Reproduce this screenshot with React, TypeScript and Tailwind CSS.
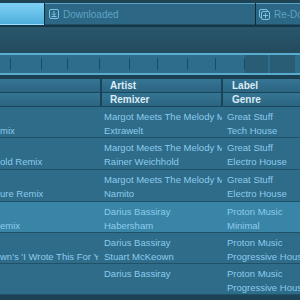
import React from 'react'

const font = { fontFamily: '"Liberation Sans", Arial, sans-serif' }

interface Track {
  title: string
  artist: string
  remixer: string
  label: string
  genre: string
  h: number
  selected?: boolean
}

const tracks: Track[] = [
  { title: 'mix', artist: 'Margot Meets The Melody Makers', remixer: 'Extrawelt', label: 'Great Stuff', genre: 'Tech House', h: 31 },
  { title: 'old Remix', artist: 'Margot Meets The Melody Makers', remixer: 'Rainer Weichhold', label: 'Great Stuff', genre: 'Electro House', h: 32 },
  { title: 'ure Remix', artist: 'Margot Meets The Melody Makers', remixer: 'Namito', label: 'Great Stuff', genre: 'Electro House', h: 32 },
  { title: 'emix', artist: 'Darius Bassiray', remixer: 'Habersham', label: 'Proton Music', genre: 'Minimal', h: 31, selected: true },
  { title: "wn's 'I Wrote This For You' Remix", artist: 'Darius Bassiray', remixer: 'Stuart McKeown', label: 'Proton Music', genre: 'Progressive House', h: 31 },
  { title: '', artist: 'Darius Bassiray', remixer: '', label: 'Proton Music', genre: 'Progressive House', h: 31 },
]

const segments = [11, 31, 26, 32, 30, 28, 30, 28, 29]

function DownloadIcon() {
  return (
    <svg className="shrink-0" width="10" height="10" viewBox="0 0 10 10" fill="none" stroke="#7fc3e3" strokeWidth="1">
      <rect x="0.5" y="0.5" width="9" height="9" rx="1.5" />
      <path d="M5 2v4M3 4.5l2 2 2-2M2.5 7.5h5" />
    </svg>
  )
}

function RedoIcon() {
  return (
    <svg className="shrink-0" width="11" height="11" viewBox="0 0 11 11" fill="none" stroke="#7fc3e3" strokeWidth="1">
      <rect x="0.5" y="0.5" width="8" height="8" rx="1.5" />
      <rect x="2.5" y="2.5" width="8" height="8" rx="1.5" fill="#2c6885" />
      <path d="M6.5 4v5M4 6.5h5" />
    </svg>
  )
}

function Tabs() {
  return (
    <div className="flex h-[22px] bg-[#2c6885]">
      <div className="w-[44px] shrink-0 bg-gradient-to-b from-[#7fd2f5] to-[#4eaedc] border-b border-[#9be0ff]" />
      <div className="w-px shrink-0 bg-[#0f2b38]" />
      <div className="flex-1 flex items-center gap-[4px] pl-[4px] border-t border-[#5aa4c6] border-b border-b-[#214f65]">
        <DownloadIcon />
        <span className="text-[10px] text-[#5fa2c3]">Downloaded</span>
      </div>
      <div className="w-px shrink-0 bg-[#0f2b38]" />
      <div className="w-[44px] shrink-0 flex items-center gap-[4px] pl-[3px] border-t border-[#5aa4c6] border-b border-b-[#214f65] overflow-hidden">
        <RedoIcon />
        <span className="text-[10px] text-[#5fa2c3] whitespace-nowrap">Re-Do</span>
      </div>
    </div>
  )
}

function Toolbar() {
  return (
    <div className="flex h-[18px] bg-[#2e6d8c]">
      {segments.map((w, i) => (
        <div key={i} className="flex shrink-0" style={{ width: w }}>
          <div className="flex-1" />
          <div className="w-px my-[3px] bg-[#1c4d63]" />
        </div>
      ))}
      <div className="w-[25px] shrink-0 bg-[#285d75] border-r-2 border-[#2e6d8c]" />
      <div className="w-[25px] shrink-0 bg-[#285d75]" />
      <div className="flex-1" />
    </div>
  )
}

function HeaderRow({ a, b }: { a: string; b: string }) {
  return (
    <div className="flex h-[14px] border-b border-[#1a4457]">
      <div className="w-[100px] shrink-0 bg-gradient-to-b from-[#357594] to-[#2b6582]" />
      <div className="w-[2px] bg-[#1a4457]" />
      <div className="w-[119px] shrink-0 bg-gradient-to-b from-[#357594] to-[#2b6582] pl-[8px] text-[10px] font-bold leading-[13px] text-[#dcecf4]">{a}</div>
      <div className="w-[2px] bg-[#1a4457]" />
      <div className="flex-1 bg-gradient-to-b from-[#357594] to-[#2b6582] pl-[9px] text-[10px] font-bold leading-[13px] text-[#dcecf4]">{b}</div>
    </div>
  )
}

function Row({ t }: { t: Track }) {
  return (
    <div
      className={`flex border-b border-[#1f5268] pt-[3px] text-[9.5px] leading-[14px] text-[#8ccbea] ${t.selected ? 'bg-[#3985a8]' : 'bg-[#2e6c8a]'}`}
      style={{ height: t.h }}
    >
      <div className="w-[98px] shrink-0 overflow-hidden whitespace-nowrap pt-[14px]">{t.title}</div>
      <div className="w-[6px] shrink-0" />
      <div className="w-[118px] shrink-0 overflow-hidden whitespace-nowrap">
        <div>{t.artist}</div>
        <div>{t.remixer}</div>
      </div>
      <div className="w-[5px] shrink-0" />
      <div className="flex-1 overflow-hidden whitespace-nowrap">
        <div>{t.label}</div>
        <div>{t.genre}</div>
      </div>
    </div>
  )
}

export default function App() {
  return (
    <div className="w-[300px] h-[300px] overflow-hidden bg-[#1c4254]" style={font}>
      <div className="h-[3px] bg-[#1d4354]" />
      <Tabs />
      <div className="h-[2px] bg-[#14384a]" />
      <div className="h-[26px] bg-gradient-to-b from-[#29566b] to-[#234b5e]" />
      <div className="h-[2px] bg-[#5aaccf]" />
      <Toolbar />
      <div className="h-[2px] bg-[#5aaccf]" />
      <div className="h-[4px] bg-[#1b4051]" />
      <HeaderRow a="Artist" b="Label" />
      <HeaderRow a="Remixer" b="Genre" />
      {tracks.map((t, i) => (
        <Row key={i} t={t} />
      ))}
    </div>
  )
}
